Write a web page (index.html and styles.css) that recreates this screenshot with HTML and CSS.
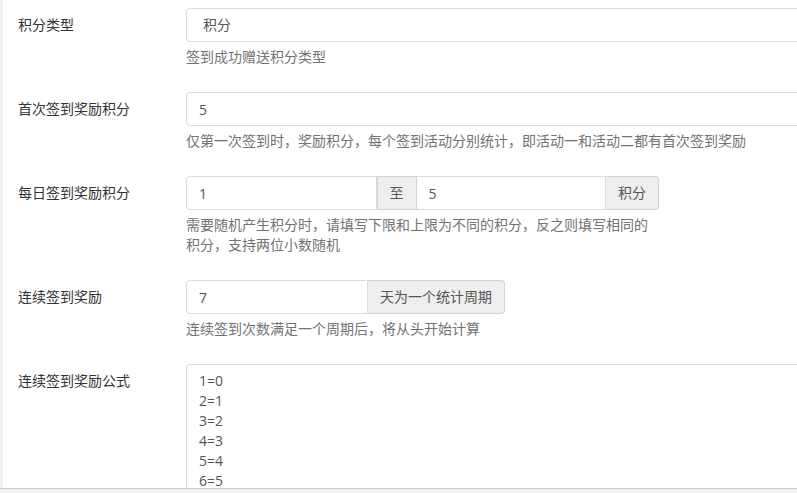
FILE: index.html
```html
<!DOCTYPE html>
<html lang="zh-CN">
<head>
<meta charset="utf-8">
<title>签到设置</title>
<link rel="stylesheet" href="styles.css">
</head>
<body>
<div class="page">
  <div class="strip"></div>
  <form class="form">
    <div class="group">
      <label class="label">积分类型</label>
      <div class="field">
        <div class="control select">积分</div>
        <p class="help">签到成功赠送积分类型</p>
      </div>
    </div>
    <div class="group">
      <label class="label">首次签到奖励积分</label>
      <div class="field">
        <input class="control" type="text" value="5">
        <p class="help">仅第一次签到时，奖励积分，每个签到活动分别统计，即活动一和活动二都有首次签到奖励</p>
      </div>
    </div>
    <div class="group">
      <label class="label">每日签到奖励积分</label>
      <div class="field narrow-a">
        <div class="igroup">
          <input class="control in first" type="text" value="1">
          <span class="addon mid">至</span>
          <input class="control in" type="text" value="5">
          <span class="addon last">积分</span>
        </div>
        <p class="help">需要随机产生积分时，请填写下限和上限为不同的积分，反之则填写相同的积分，支持两位小数随机</p>
      </div>
    </div>
    <div class="group">
      <label class="label">连续签到奖励</label>
      <div class="field narrow-b">
        <div class="igroup">
          <input class="control in first" type="text" value="7">
          <span class="addon last">天为一个统计周期</span>
        </div>
        <p class="help">连续签到次数满足一个周期后，将从头开始计算</p>
      </div>
    </div>
    <div class="group">
      <label class="label">连续签到奖励公式</label>
      <div class="field">
        <textarea class="control area">1=0
2=1
3=2
4=3
5=4
6=5
7=6</textarea>
      </div>
    </div>
  </form>
</div>
<div class="hscroll"></div>
</body>
</html>
```
FILE: styles.css
```css
html, body {
  margin: 0;
  padding: 0;
  height: 100%;
  overflow: hidden;
  background: #fff;
}
body {
  font-family: "Open Sans", "Noto Sans CJK SC", sans-serif;
  font-size: 14px;
  line-height: 20px;
  color: #333;
}
.page {
  display: flex;
  align-items: stretch;
  width: 100%;
  height: 100%;
  overflow: hidden;
}
.strip {
  width: 3px;
  flex: none;
  background: #f1f1f8;
}
.form {
  flex: 1 1 auto;
  min-width: 0;
  overflow: hidden;
  padding-top: 8px;
}
.group {
  display: flex;
  margin-bottom: 15px;
}
.label {
  width: 183px;
  flex: none;
  box-sizing: border-box;
  padding-left: 15px;
  padding-top: 7px;
  color: #333;
}
.field {
  width: 700px;
  flex: none;
}
.field.narrow-a { width: 473px; }
.field.narrow-b { width: 319px; }
.control {
  display: block;
  box-sizing: border-box;
  width: 100%;
  height: 34px;
  margin: 0;
  padding: 6px 12px;
  font: inherit;
  font-size: 14px;
  line-height: 20px;
  color: #555;
  background: #fff;
  border: 1px solid #dcdcdc;
  border-radius: 4px;
  outline: none;
}
.control.select {
  padding-left: 16px;
}
.help {
  margin: 5px 0 10px;
  color: #737373;
}
.igroup {
  display: flex;
}
.igroup .in {
  flex: 1 1 0;
  min-width: 0;
  border-radius: 0;
}
.igroup .in.first {
  border-radius: 4px 0 0 4px;
}
.addon {
  flex: none;
  box-sizing: border-box;
  height: 34px;
  padding: 6px 12px;
  color: #555;
  background: #eee;
  border: 1px solid #d4d4d4;
  text-align: center;
  white-space: nowrap;
}
.addon.mid {
  width: 40px;
  padding: 6px 0;
}
.addon.last {
  border-left: 0;
  border-radius: 0 4px 4px 0;
}
.addon.mid + .in { border-left: 0; }
.area {
  height: 170px;
  resize: none;
  overflow: hidden;
  border-bottom-left-radius: 0;
  border-bottom-right-radius: 0;
}
.hscroll {
  position: fixed;
  left: 0;
  right: 0;
  bottom: 0;
  height: 4px;
  background: #f1f1f1;
  border-top: 1px solid #c8c8c8;
}
```
